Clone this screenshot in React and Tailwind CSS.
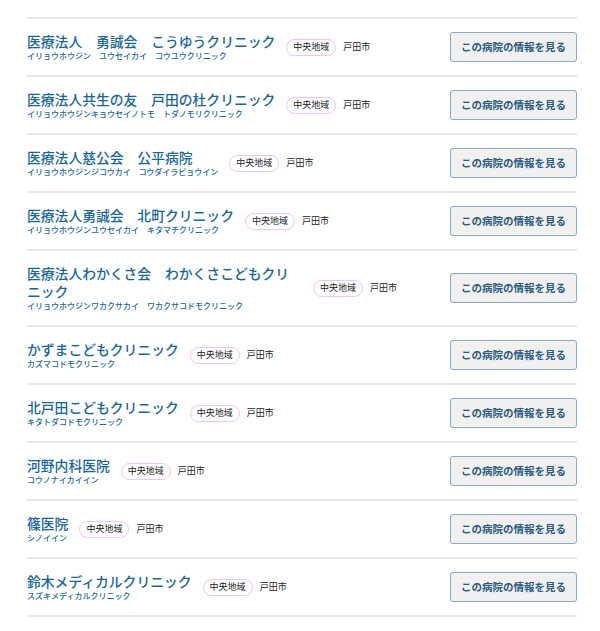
const hospitals = [
  { name: "医療法人　勇誠会　こうゆうクリニック", kana: "イリョウホウジン　ユウセイカイ　コウユウクリニック" },
  { name: "医療法人共生の友　戸田の杜クリニック", kana: "イリョウホウジンキョウセイノトモ　トダノモリクリニック" },
  { name: "医療法人慈公会　公平病院", kana: "イリョウホウジンジコウカイ　コウダイラビョウイン" },
  { name: "医療法人勇誠会　北町クリニック", kana: "イリョウホウジンユウセイカイ　キタマチクリニック" },
  { name: "医療法人わかくさ会　わかくさこどもクリニック", kana: "イリョウホウジンワカクサカイ　ワカクサコドモクリニック" },
  { name: "かずまこどもクリニック", kana: "カズマコドモクリニック" },
  { name: "北戸田こどもクリニック", kana: "キタトダコドモクリニック" },
  { name: "河野内科医院", kana: "コウノナイカイイン" },
  { name: "篠医院", kana: "シノイイン" },
  { name: "鈴木メディカルクリニック", kana: "スズキメディカルクリニック" },
];

const HospitalRow = ({ name, kana }) => {
  return (
    <li className="flex items-center border-b-2 border-[#e8e8e8] py-[13px]">
      <div className="max-w-[275px] shrink-0">
        <p className="text-[13.8px] leading-[18px] font-medium text-[#19669c]">{name}</p>
        <p className="text-[8px] leading-[12px] font-medium text-[#19669c] whitespace-nowrap">{kana}</p>
      </div>
      <span className="ml-[11px] shrink-0 h-[17px] px-[6px] flex items-center rounded-full border border-[#f0c4f0] text-[9px] text-[#222]">
        中央地域
      </span>
      <span className="ml-[7px] text-[9px] text-[#222]">戸田市</span>
      <button className="ml-auto shrink-0 w-[127px] h-[30px] rounded-[3px] border border-[#8aaabf] bg-[#f0f0f0] text-[10.5px] font-semibold text-[#2a5a80]">
        この病院の情報を見る
      </button>
    </li>
  );
};

export default function App() {
  return (
    <div
      className="bg-white min-h-[631px] pt-[17px]"
      style={{ fontFamily: '"Noto Sans CJK JP", "Noto Sans", sans-serif' }}
    >
      <ul className="mx-[27px] w-[550px] border-t-2 border-[#e8e8e8]">
        {hospitals.map((h) => (
          <HospitalRow key={h.name} {...h} />
        ))}
      </ul>
    </div>
  );
}
